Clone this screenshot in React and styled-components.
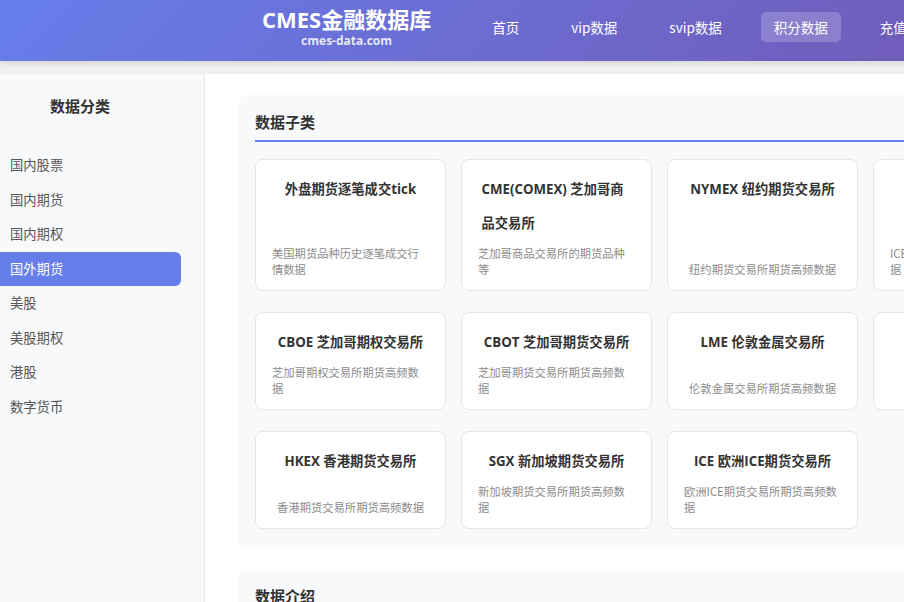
import React from "react";
import styled, { createGlobalStyle } from "styled-components";

const Global = createGlobalStyle`
  html, body { margin: 0; padding: 0; overflow: hidden; }
  body {
    background: #f0f0f0;
    font-family: "Noto Sans CJK SC", "Open Sans", sans-serif;
    color: #333;
  }
  * { box-sizing: border-box; }
`;

const Page = styled.div`
  width: 1400px;
`;

const Header = styled.header`
  height: 61px;
  background: linear-gradient(135deg, #667eea 0%, #764ba2 100%);
  display: flex;
  align-items: flex-start;
  padding-left: 262px;
  box-shadow: 0 2px 6px rgba(0, 0, 0, 0.12);
  position: relative;
  z-index: 1;
`;

const Brand = styled.div`
  display: flex;
  flex-direction: column;
  align-items: center;
  padding-top: 6px;
  color: #fff;
`;

const BrandTitle = styled.div`
  font-family: "Open Sans", "Noto Sans CJK SC", sans-serif;
  font-size: 22px;
  font-weight: 700;
  line-height: 26px;
`;

const BrandSub = styled.div`
  margin-top: 1px;
  font-size: 12px;
  font-weight: 700;
  line-height: 16px;
  color: rgba(255, 255, 255, 0.85);
  font-family: "Open Sans", sans-serif;
`;

const Nav = styled.nav`
  display: flex;
  gap: 26px;
  margin-left: 48px;
  margin-top: 12px;
`;

const NavItem = styled.a`
  display: block;
  padding: 6px 13px;
  line-height: 18px;
  font-size: 13.5px;
  color: #fff;
  border-radius: 5px;
  white-space: nowrap;
  background: ${(p) => (p.$active ? "rgba(255,255,255,0.2)" : "transparent")};
`;

const Body = styled.div`
  margin-top: 13px;
  display: flex;
  align-items: stretch;
  min-height: 600px;
`;

const Sidebar = styled.aside`
  width: 205px;
  flex: none;
  background: #f8f9fa;
  border-right: 1px solid #e6e8eb;
  padding: 20px 23px 0 0;
`;

const SideTitle = styled.h3`
  margin: 0 0 30px;
  width: 160px;
  text-align: center;
  font-size: 15px;
  font-weight: 700;
  line-height: 24px;
  color: #333;
`;

const SideItem = styled.div`
  padding: 7px 10px;
  line-height: 20.5px;
  font-size: 13.3px;
  color: ${(p) => (p.$active ? "#fff" : "#555")};
  background: ${(p) => (p.$active ? "#667eea" : "transparent")};
  border-radius: 0 6px 6px 0;
`;

const Main = styled.main`
  flex: 1;
  background: #fff;
  padding: 21px 33px;
  display: flex;
  flex-direction: column;
  gap: 21px;
`;

const Panel = styled.section`
  background: #f8f9fa;
  border-radius: 10px;
  padding: 16px 17px 19px;
`;

const PanelTitle = styled.h2`
  margin: 0 0 17px;
  font-size: 15px;
  font-weight: 700;
  line-height: 22px;
  padding-bottom: 7px;
  border-bottom: 2px solid #667eea;
  color: #333;
`;

const Grid = styled.div`
  display: grid;
  grid-template-columns: repeat(4, 191px);
  column-gap: 15px;
  row-gap: 21px;
`;

const Card = styled.div`
  background: #fff;
  border: 1px solid #e6e6e6;
  border-radius: 8px;
  padding: 12px 16px 13px;
  display: flex;
  flex-direction: column;
  align-items: center;
`;

const CardTitle = styled.div`
  max-width: 150px;
  font-family: "Open Sans", "Noto Sans CJK SC", sans-serif;
  font-size: 13.3px;
  font-weight: 700;
  line-height: 34px;
  color: #333;
`;

const CardDesc = styled.div`
  margin-top: auto;
  padding-top: 5px;
  font-size: 11.3px;
  line-height: 16px;
  color: #8c8c8c;
`;

const Intro = styled.p`
  margin: 0;
  font-size: 14px;
  line-height: 24px;
  color: #555;
`;

const navItems = ["首页", "vip数据", "svip数据", "积分数据", "充值中心", "个人中心"];
const sideItems = ["国内股票", "国内期货", "国内期权", "国外期货", "美股", "美股期权", "港股", "数字货币"];

const cards = [
  { t: "外盘期货逐笔成交tick", d: "美国期货品种历史逐笔成交行情数据" },
  { t: "CME(COMEX) 芝加哥商品交易所", d: "芝加哥商品交易所的期货品种等" },
  { t: "NYMEX 纽约期货交易所", d: "纽约期货交易所期货高频数据" },
  { t: "ICE 美国期货交易所", d: "ICE美国期货交易所期货高频数据" },
  { t: "CBOE 芝加哥期权交易所", d: "芝加哥期权交易所期货高频数据" },
  { t: "CBOT 芝加哥期货交易所", d: "芝加哥期货交易所期货高频数据" },
  { t: "LME 伦敦金属交易所", d: "伦敦金属交易所期货高频数据" },
  { t: "JPX 日本交易所", d: "日本交易所期货高频数据" },
  { t: "HKEX 香港期货交易所", d: "香港期货交易所期货高频数据" },
  { t: "SGX 新加坡期货交易所", d: "新加坡期货交易所期货高频数据" },
  { t: "ICE 欧洲ICE期货交易所", d: "欧洲ICE期货交易所期货高频数据" },
];

export default function App() {
  return (
    <Page>
      <Global />
      <Header>
        <Brand>
          <BrandTitle>CMES金融数据库</BrandTitle>
          <BrandSub>cmes-data.com</BrandSub>
        </Brand>
        <Nav>
          {navItems.map((n) => (
            <NavItem key={n} $active={n === "积分数据"}>
              {n}
            </NavItem>
          ))}
        </Nav>
      </Header>
      <Body>
        <Sidebar>
          <SideTitle>数据分类</SideTitle>
          {sideItems.map((s) => (
            <SideItem key={s} $active={s === "国外期货"}>
              {s}
            </SideItem>
          ))}
        </Sidebar>
        <Main>
          <Panel>
            <PanelTitle>数据子类</PanelTitle>
            <Grid>
              {cards.map((c) => (
                <Card key={c.t}>
                  <CardTitle>{c.t}</CardTitle>
                  <CardDesc>{c.d}</CardDesc>
                </Card>
              ))}
            </Grid>
          </Panel>
          <Panel>
            <PanelTitle>数据介绍</PanelTitle>
            <Intro>国外期货数据涵盖全球主要期货交易所的历史行情数据。</Intro>
          </Panel>
        </Main>
      </Body>
    </Page>
  );
}
